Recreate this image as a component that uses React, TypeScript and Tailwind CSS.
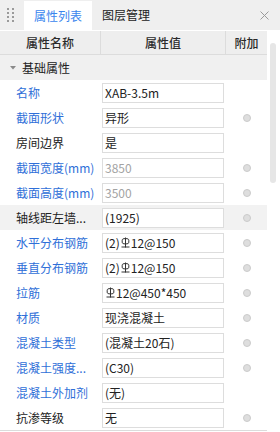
type Row = {
  label: string;
  value: React.ReactNode;
  blue?: boolean;
  muted?: boolean;
  dot?: boolean;
  active?: boolean;
};

function Rebar() {
  // HRB400 rebar grade symbol
  return (
    <svg width="9" height="11" viewBox="0 0 9 11" className="inline-block align-[-1px] mx-[1px]">
      <path d="M4.5 0.5V10.5" stroke="#333" strokeWidth="1" fill="none" />
      <path d="M1.2 3.2C1.2 2 2.2 1.6 4.5 1.6C6.8 1.6 7.8 2 7.8 3.2V5.3C7.8 6.5 6.8 6.9 4.5 6.9C2.2 6.9 1.2 6.5 1.2 5.3Z" stroke="#333" strokeWidth="1" fill="none" />
      <path d="M0.5 10H8.5" stroke="#333" strokeWidth="1" fill="none" />
    </svg>
  );
}

const rows: Row[] = [
  { label: "名称", value: "XAB-3.5m", blue: true },
  { label: "截面形状", value: "异形", blue: true, dot: true },
  { label: "房间边界", value: "是" },
  { label: "截面宽度(mm)", value: "3850", blue: true, muted: true, dot: true },
  { label: "截面高度(mm)", value: "3500", blue: true, muted: true, dot: true },
  { label: "轴线距左墙...", value: "(1925)", dot: true, active: true },
  { label: "水平分布钢筋", value: <>(2)<Rebar />12@150</>, blue: true, dot: true },
  { label: "垂直分布钢筋", value: <>(2)<Rebar />12@150</>, blue: true, dot: true },
  { label: "拉筋", value: <><Rebar />12@450*450</>, blue: true, dot: true },
  { label: "材质", value: "现浇混凝土", blue: true, dot: true },
  { label: "混凝土类型", value: "(混凝土20石)", blue: true, dot: true },
  { label: "混凝土强度...", value: "(C30)", blue: true, dot: true },
  { label: "混凝土外加剂", value: "(无)", blue: true },
  { label: "抗渗等级", value: "无", dot: true },
];

export default function App() {
  return (
    <div className="w-[280px] h-[432px] overflow-hidden bg-white text-[12px] leading-none text-[#333] font-['Microsoft_YaHei','Noto_Sans_CJK_SC',sans-serif]">
      {/* tab bar */}
      <div className="flex h-[31px] items-stretch border-b border-white bg-[#efefef]">
        <div className="grid w-[24px] grid-cols-2 content-center justify-center gap-x-[3px] gap-y-[2px] pl-[7px] pr-[10px]">
          {Array.from({ length: 8 }).map((_, i) => (
            <span key={i} className="h-[2px] w-[2px] bg-[#9a9a9a]" />
          ))}
        </div>
        <div className="mt-[1px] flex items-center bg-white px-[10px] text-[12px] text-[#3a85ee]">属性列表</div>
        <div className="flex items-center px-[10px] text-[12px] text-[#222]">图层管理</div>
        <div className="ml-auto mr-[11px] flex items-center">
          <svg width="9" height="9" viewBox="0 0 9 9">
            <path d="M0.5 0.5L8.5 8.5M8.5 0.5L0.5 8.5" stroke="#9a9a9a" strokeWidth="1" />
          </svg>
        </div>
      </div>

      <div className="flex">
        <div className="w-[267px]">
          {/* header */}
          <div className="flex h-[24px] border-b border-[#dcdcdc] bg-[#eeeeee] font-medium text-[#2a2a2a]">
            <div className="flex w-[101px] items-center justify-center border-r border-[#dcdcdc]">属性名称</div>
            <div className="flex w-[125px] items-center justify-center border-r border-[#dcdcdc]">属性值</div>
            <div className="flex flex-1 items-center justify-center">附加</div>
          </div>

          {/* group */}
          <div className="flex h-[25px] items-center bg-[#f0f0f0] pl-[10px]">
            <svg width="6" height="4" viewBox="0 0 6 4" className="mr-[6px]">
              <path d="M0 0H6L3 3.5Z" fill="#8a8a8a" />
            </svg>
            <span className="text-[#222]">基础属性</span>
          </div>

          {rows.map((r) => (
            <div key={r.label} className={`flex h-[25px] items-center ${r.active ? "bg-[#f2f2f2]" : ""}`}>
              <div className={`w-[101px] whitespace-nowrap pl-[16px] ${r.blue ? "text-[#2f6fd8]" : "text-[#222]"}`}>{r.label}</div>
              <div className="w-[125px] pl-[1px]">
                <div className={`flex h-[20px] w-[122px] items-center whitespace-nowrap border border-[#dddddd] bg-white pl-[2px] ${r.muted ? "text-[#a3a3a3]" : "text-[#222]"}`}>
                  {r.value}
                </div>
              </div>
              <div className="flex flex-1 items-center justify-center">
                {r.dot ? <span className="h-[8px] w-[8px] rounded-full border border-[#cbcbcb] bg-[#dedede]" /> : null}
              </div>
            </div>
          ))}
          <div className="border-t border-[#dcdcdc]" />
        </div>

        {/* scrollbar */}
        <div className="flex-1 pl-[3px] pt-[12px]">
          <div className="h-[140px] w-[6px] rounded-[3px] bg-[#e6e6e6]" />
        </div>
      </div>
    </div>
  );
}
